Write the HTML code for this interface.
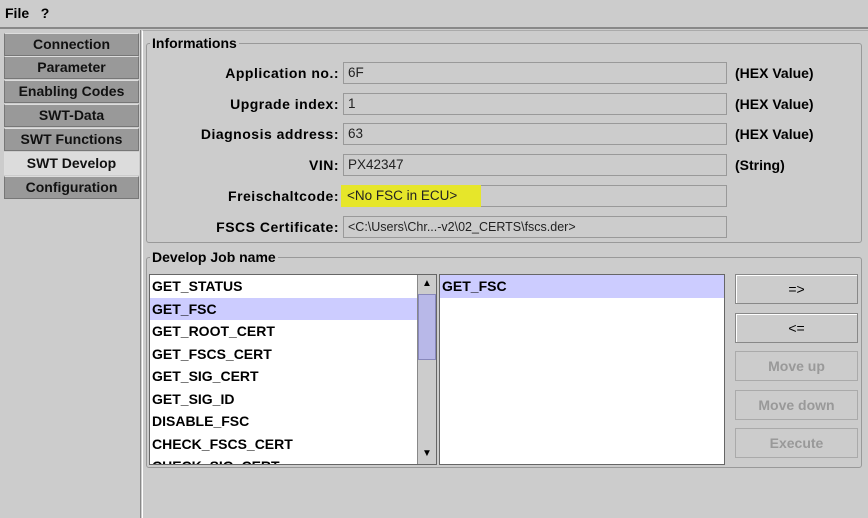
<!DOCTYPE html><html><head><style>
body{margin:0;width:868px;height:518px;background:#cccccc;font-family:"Liberation Sans",sans-serif;font-size:14px;font-weight:bold;position:relative;overflow:hidden;color:#000}
div{position:absolute;box-sizing:border-box;white-space:nowrap}
.tab{left:4px;width:135px;height:23px;background:#999;border:1px solid #777;border-top-color:#ddd;text-align:center;line-height:21px;font-size:14px;color:#111}
.lab{right:529px;width:200px;text-align:right;height:22px;line-height:22px;letter-spacing:0.5px}
.fld{left:343px;width:384px;height:22px;border:1px solid #999;background:#cccccc;font-weight:normal;line-height:20px;padding-left:4px;color:#222;font-size:13.5px}
.hex{left:735px;height:22px;line-height:22px}
.grp{border:1px solid #999;border-radius:3px}
.gt{background:#cccccc;padding:0 2px;font-size:14px}
.it{left:0;width:100%;height:22.5px;line-height:22px;padding-left:2px}
.btn{left:735px;width:123px;height:30px;border:1px solid #888;background:#cccccc;text-align:center;line-height:28px;font-weight:normal;box-shadow:inset 1px 1px #fff}
.dis{color:#999;font-weight:bold;box-shadow:none;border-color:#aaa}
</style></head><body>
<div style="left:5px;top:5px;font-size:14px">File&nbsp;&nbsp;&nbsp;?</div>
<div style="left:0;top:27px;width:868px;height:2px;background:#888"></div>
<div class="tab" style="top:33px">Connection</div>
<div class="tab" style="top:56px">Parameter</div>
<div class="tab" style="top:80px">Enabling Codes</div>
<div class="tab" style="top:104px">SWT-Data</div>
<div class="tab" style="top:128px">SWT Functions</div>
<div class="tab" style="top:152px;background:#dcdcdc;border-color:#ddd">SWT Develop</div>
<div class="tab" style="top:176px">Configuration</div>
<div style="left:140px;top:30px;width:1px;height:488px;background:#888"></div>
<div style="left:142px;top:30px;width:726px;height:488px;border-left:1px solid #fff;border-top:1px solid #aaa"></div>
<div class="grp" style="left:146px;top:43px;width:716px;height:200px"></div>
<div class="gt" style="left:150px;top:35px">Informations</div>
<div class="lab" style="top:62px">Application no.:</div><div class="fld" style="top:62px">6F</div><div class="hex" style="top:62px">(HEX Value)</div>
<div class="lab" style="top:93px">Upgrade index:</div><div class="fld" style="top:93px">1</div><div class="hex" style="top:93px">(HEX Value)</div>
<div class="lab" style="top:123px">Diagnosis address:</div><div class="fld" style="top:123px">63</div><div class="hex" style="top:123px">(HEX Value)</div>
<div class="lab" style="top:154px">VIN:</div><div class="fld" style="top:154px">PX42347</div><div class="hex" style="top:154px">(String)</div>
<div class="lab" style="top:185px">Freischaltcode:</div><div class="fld" style="top:185px"></div>
<div style="left:341px;top:185px;width:140px;height:22px;background:#e6e62a;font-weight:normal;line-height:21px;padding-left:6px;color:#222;font-size:13.5px">&lt;No FSC in ECU&gt;</div>
<div class="lab" style="top:216px">FSCS Certificate:</div><div class="fld" style="top:216px;font-size:12.5px">&lt;C:\Users\Chr...-v2\02_CERTS\fscs.der&gt;</div>
<div class="grp" style="left:146px;top:257px;width:716px;height:211px"></div>
<div class="gt" style="left:150px;top:249px">Develop Job name</div>
<div style="left:149px;top:274px;width:288px;height:191px;border:1px solid #666;background:#fff;overflow:hidden">
<div style="left:0;top:0;width:267px;height:189px">
<div class="it" style="top:0">GET_STATUS</div>
<div class="it" style="top:22.5px;background:#ccccff">GET_FSC</div>
<div class="it" style="top:45px">GET_ROOT_CERT</div>
<div class="it" style="top:67.5px">GET_FSCS_CERT</div>
<div class="it" style="top:90px">GET_SIG_CERT</div>
<div class="it" style="top:112.5px">GET_SIG_ID</div>
<div class="it" style="top:135px">DISABLE_FSC</div>
<div class="it" style="top:157.5px">CHECK_FSCS_CERT</div>
<div class="it" style="top:180px">CHECK_SIG_CERT</div>
</div>
<div style="left:267px;top:0;width:19px;height:189px;background:#cccccc;border-left:1px solid #888">
<div style="left:0;top:0;width:18px;height:18px;text-align:center;font-size:10px;line-height:18px">▲</div>
<div style="left:0;top:19px;width:18px;height:66px;background:#b8b8e8;border:1px solid #8888bb"></div>
<div style="left:0;top:170px;width:18px;height:18px;text-align:center;font-size:10px;line-height:18px">▼</div>
</div></div>
<div style="left:439px;top:274px;width:286px;height:191px;border:1px solid #666;background:#fff">
<div class="it" style="top:0;background:#ccccff">GET_FSC</div></div>
<div class="btn" style="top:274px">=&gt;</div>
<div class="btn" style="top:313px">&lt;=</div>
<div class="btn dis" style="top:351px">Move up</div>
<div class="btn dis" style="top:390px">Move down</div>
<div class="btn dis" style="top:428px">Execute</div>
</body></html>
